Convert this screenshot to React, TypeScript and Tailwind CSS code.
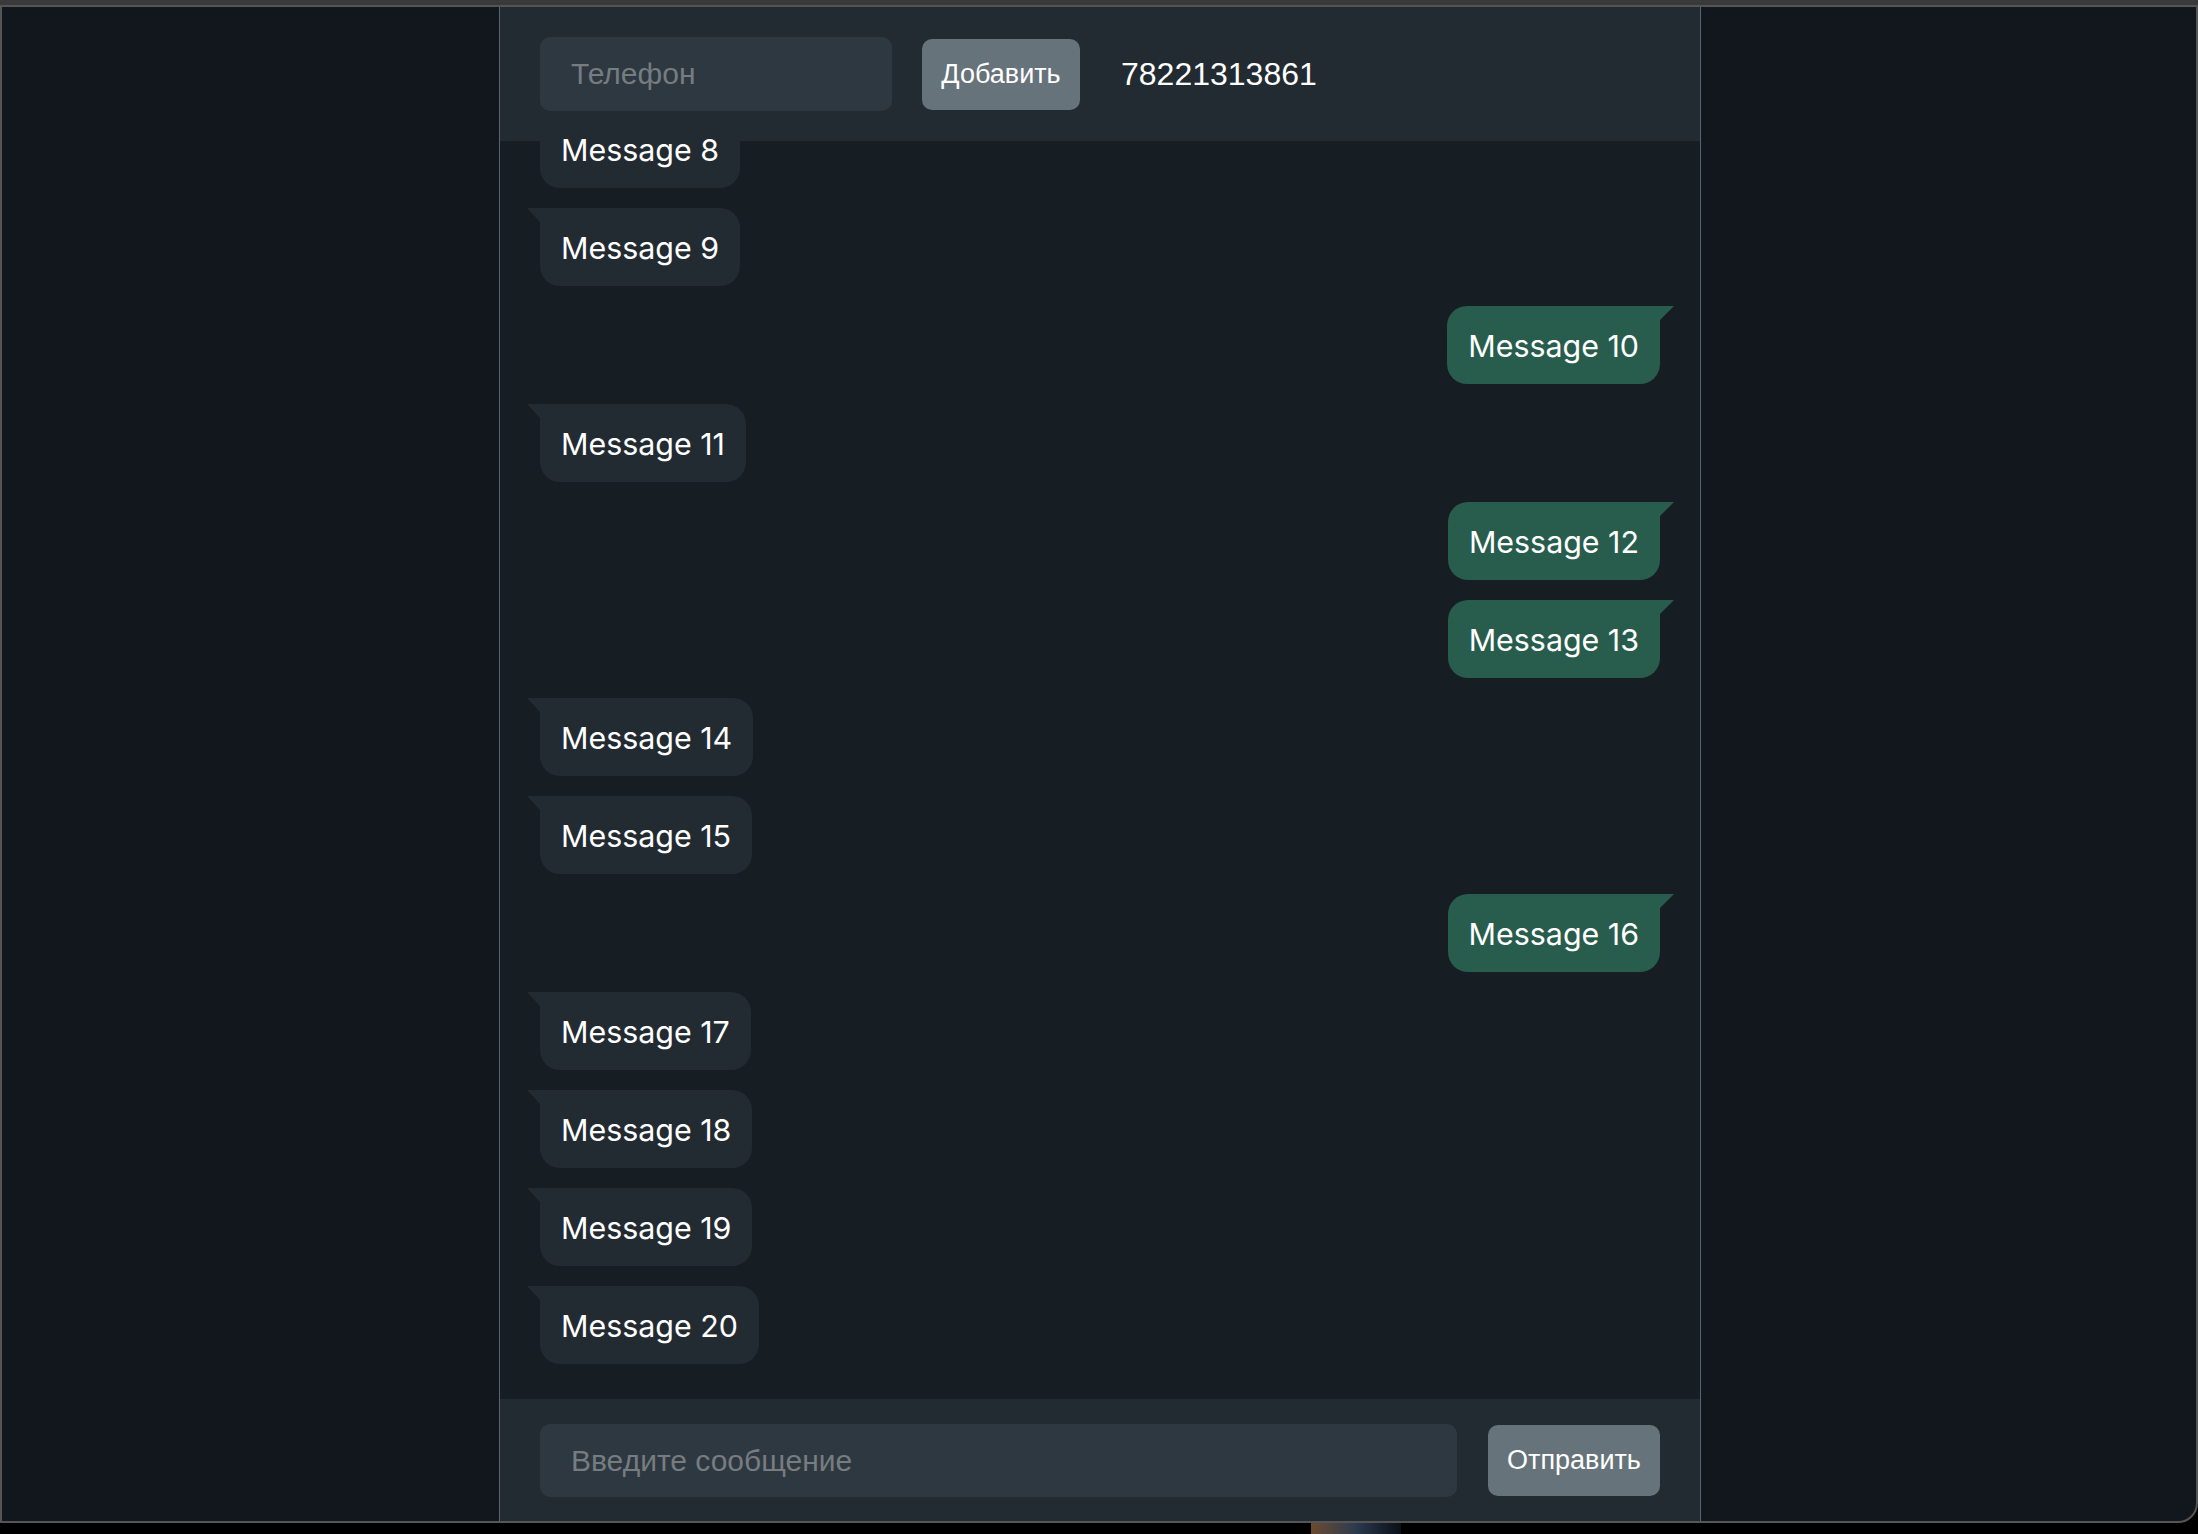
import { useState } from "react";

type Msg = { id: number; text: string; mine: boolean };

const mineIds = [10, 12, 13, 16];

const initial: Msg[] = Array.from({ length: 13 }, (_, i) => ({
  id: i + 8,
  text: `Message ${i + 8}`,
  mine: mineIds.includes(i + 8),
}));

function Bubble({ msg }: { msg: Msg }) {
  return (
    <div className={msg.mine ? "flex justify-end" : "flex justify-start"}>
      <div
        className={
          msg.mine
            ? "relative rounded-[20px] rounded-tr-none bg-[#285c4c] px-[21px] pb-[19px] pt-[21px] text-[30.4px] leading-[38px] text-white"
            : "relative rounded-[20px] rounded-tl-none bg-[#232b32] px-[21px] pb-[19px] pt-[21px] text-[30.4px] leading-[38px] text-white"
        }
      >
        {msg.mine ? (
          <span className="absolute right-[-14px] top-0 h-[14px] w-[14px] bg-[#285c4c] [clip-path:polygon(0_0,100%_0,0_100%)]" />
        ) : (
          <span className="absolute left-[-13px] top-0 h-[14px] w-[13px] bg-[#232b32] [clip-path:polygon(0_0,100%_0,100%_100%)]" />
        )}
        {msg.text}
      </div>
    </div>
  );
}

export default function App() {
  const [messages, setMessages] = useState<Msg[]>(initial);
  const [text, setText] = useState("");
  const [phone, setPhone] = useState("");
  const [contact, setContact] = useState("78221313861");

  const send = () => {
    if (!text.trim()) return;
    setMessages((m) => [...m, { id: m.length + 8, text, mine: true }]);
    setText("");
  };

  return (
    <div className="flex h-screen w-full flex-col overflow-hidden bg-black font-['Liberation_Sans',Arial,sans-serif]">
      {/* window frame */}
      <div className="h-[5px] shrink-0 bg-[#3a3a3a]" />
      <div className="flex min-h-0 flex-1 flex-col rounded-br-[20px] border-2 border-[#555555] bg-[#11171c]">
        <div className="ml-[497px] flex min-h-0 w-[1202px] flex-1 flex-col border-x border-[#59636b] bg-[#161d23]">
          {/* Header */}
          <div className="flex shrink-0 items-center bg-[#232b32] px-[40px] py-[30px]">
            <input
              value={phone}
              onChange={(e) => setPhone(e.target.value)}
              placeholder="Телефон"
              className="h-[74px] w-[352px] rounded-[10px] bg-[#2d3841] pl-[31px] text-[30px] text-white outline-none placeholder:text-[#777c80]"
            />
            <button
              onClick={() => phone && setContact(phone)}
              className="ml-[30px] h-[71px] w-[158px] rounded-[10px] bg-[#67737b] text-[27px] text-white"
            >
              Добавить
            </button>
            <span className="ml-[41px] text-[32px] text-white">{contact}</span>
          </div>

          {/* Messages */}
          <div className="flex min-h-0 flex-1 flex-col justify-end gap-[20px] px-[40px] pb-[35px] font-['Inter',sans-serif] [clip-path:inset(-4px_0_0_0)]">
            {messages.map((m) => (
              <Bubble key={m.id} msg={m} />
            ))}
          </div>

          {/* Footer */}
          <div className="flex shrink-0 items-center gap-[31px] bg-[#232b32] px-[40px] pb-[24px] pt-[25px]">
            <input
              value={text}
              onChange={(e) => setText(e.target.value)}
              onKeyDown={(e) => e.key === "Enter" && send()}
              placeholder="Введите сообщение"
              className="h-[73px] min-w-0 flex-1 rounded-[10px] bg-[#2d3841] pl-[31px] text-[30px] text-white outline-none placeholder:text-[#777c80]"
            />
            <button
              onClick={send}
              className="h-[71px] w-[172px] shrink-0 rounded-[10px] bg-[#67737b] text-[27px] text-white"
            >
              Отправить
            </button>
          </div>
        </div>
      </div>
      <div className="flex h-[11px] shrink-0">
        <div className="w-[1311px] bg-black" />
        <div className="w-[90px] bg-gradient-to-r from-[#6b4a2c] via-[#2c3a4e] to-[#0b1018]" />
        <div className="flex-1 bg-black" />
      </div>
    </div>
  );
}
